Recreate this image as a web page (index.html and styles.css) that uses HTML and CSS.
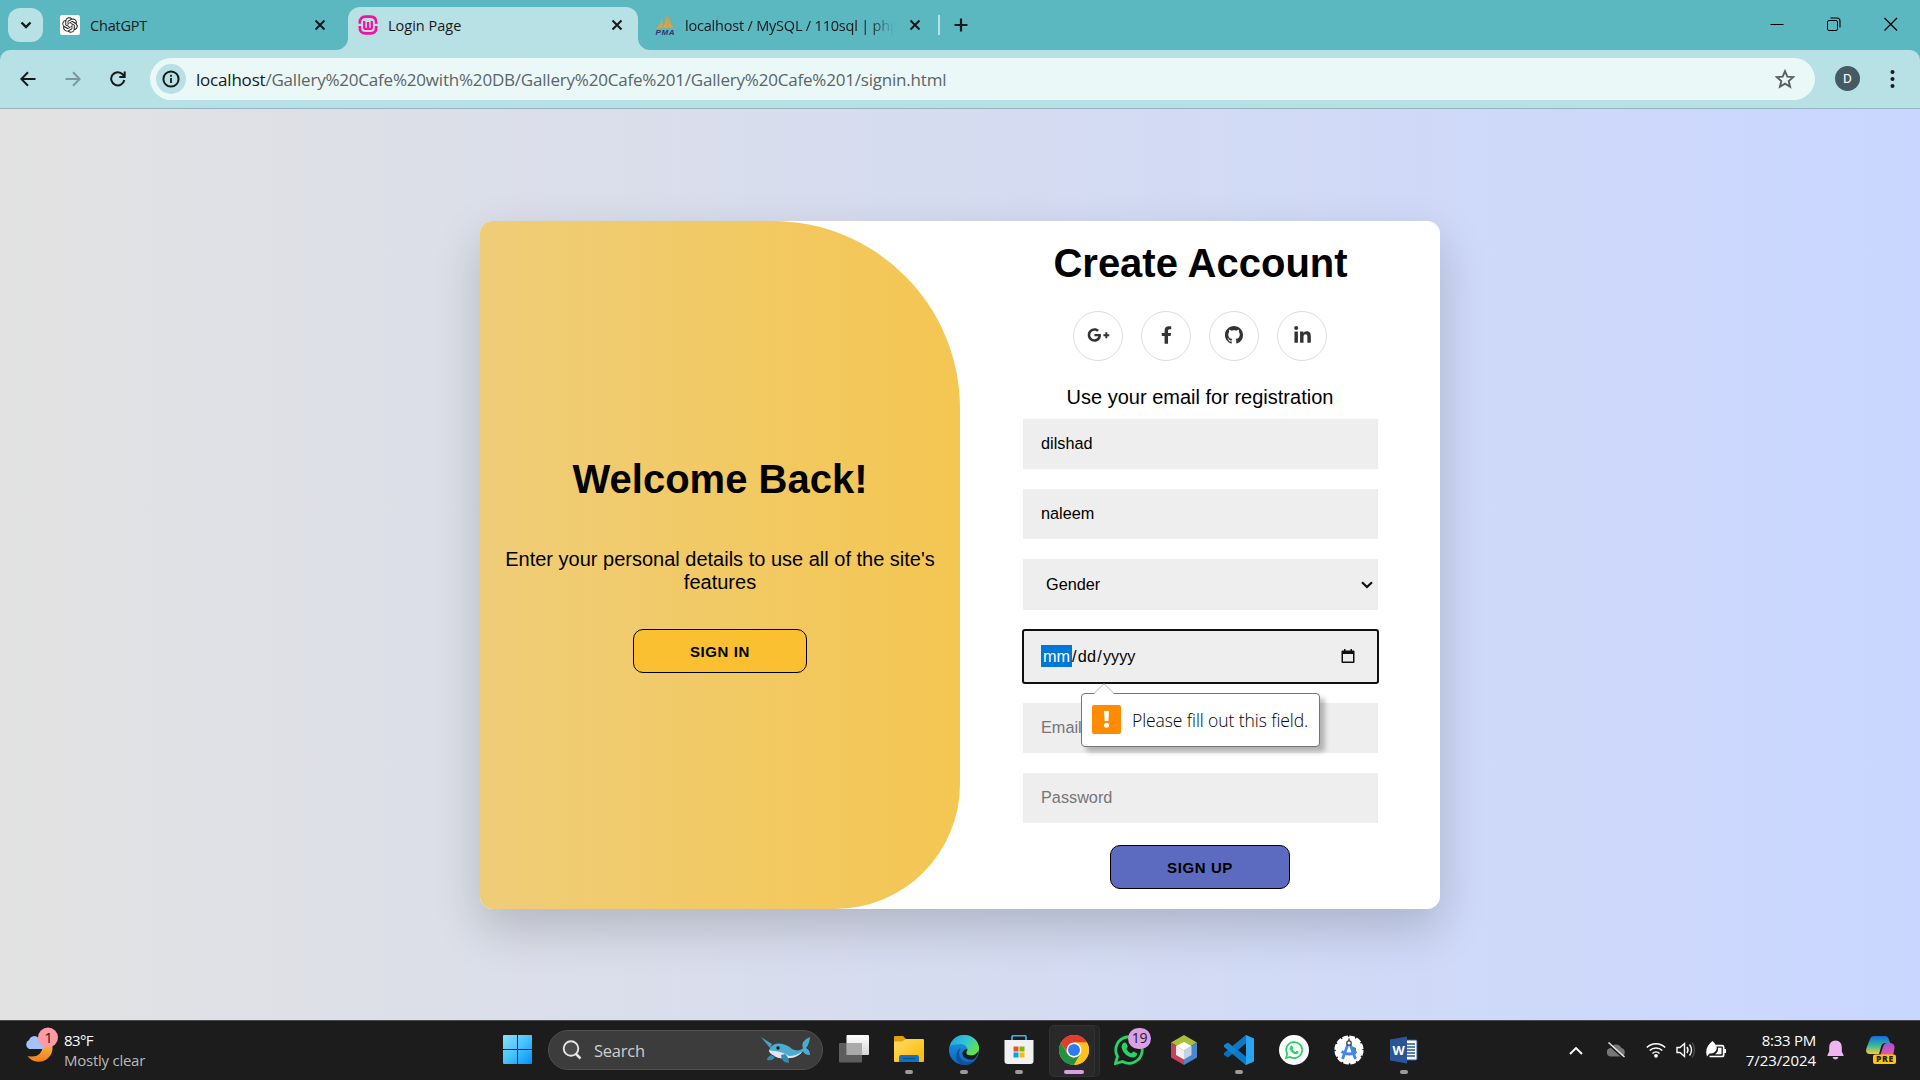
FILE: index.html
```html
<!DOCTYPE html>
<html lang="en">
<head>
<meta charset="utf-8">
<title>Login Page</title>
<link rel="stylesheet" href="styles.css">
</head>
<body>
<div class="tabstrip">
  <div class="tab-search"><svg width="12" height="8" viewBox="0 0 12 8"><path d="M1.5 1.5 6 6l4.500-4.500" fill="none" stroke="#17191b" stroke-width="2.400"/></svg></div>
  <div class="tab tab-one">
    <svg class="fav" viewBox="0 0 20 20"><rect width="20" height="20" rx="2" fill="#fff"/><path transform="translate(2.200 2.200) scale(.65)" fill="#222" d="M22.2819 9.8211a5.9847 5.9847 0 0 0-.5157-4.9108 6.0462 6.0462 0 0 0-6.5098-2.9A6.0651 6.0651 0 0 0 4.9807 4.1818a5.9847 5.9847 0 0 0-3.9977 2.9 6.0462 6.0462 0 0 0 .7427 7.0966 5.98 5.98 0 0 0 .511 4.9107 6.051 6.051 0 0 0 6.5146 2.9001A5.9847 5.9847 0 0 0 13.2599 24a6.0557 6.0557 0 0 0 5.7718-4.2058 5.9894 5.9894 0 0 0 3.9977-2.9001 6.0557 6.0557 0 0 0-.7475-7.0729zm-9.022 12.6081a4.4755 4.4755 0 0 1-2.8764-1.0408l.1419-.0804 4.7783-2.7582a.7948.7948 0 0 0 .3927-.6813v-6.7369l2.02 1.1686a.071.071 0 0 1 .038.052v5.5826a4.504 4.504 0 0 1-4.4945 4.4944zm-9.6607-4.1254a4.4708 4.4708 0 0 1-.5346-3.0137l.142.0852 4.783 2.7582a.7712.7712 0 0 0 .7806 0l5.8428-3.3685v2.3324a.0804.0804 0 0 1-.0332.0615L9.74 19.9502a4.4992 4.4992 0 0 1-6.1408-1.6464zM2.3408 7.8956a4.485 4.485 0 0 1 2.3655-1.9728V11.6a.7664.7664 0 0 0 .3879.6765l5.8144 3.3543-2.0201 1.1685a.0757.0757 0 0 1-.071 0l-4.8303-2.7865A4.504 4.504 0 0 1 2.3408 7.872zm16.5963 3.8558L13.1038 8.364 15.1192 7.2a.0757.0757 0 0 1 .071 0l4.8303 2.7913a4.4944 4.4944 0 0 1-.6765 8.1042v-5.6772a.79.79 0 0 0-.407-.667zm2.0107-3.0231l-.142-.0852-4.7735-2.7818a.7759.7759 0 0 0-.7854 0L9.409 9.2297V6.8974a.0662.0662 0 0 1 .0284-.0615l4.8303-2.7866a4.4992 4.4992 0 0 1 6.6802 4.66zM8.3065 12.863l-2.02-1.1638a.0804.0804 0 0 1-.038-.0567V6.0742a4.4992 4.4992 0 0 1 7.3757-3.4537l-.142.0805L8.704 5.459a.7948.7948 0 0 0-.3927.6813zm1.0976-2.3654l2.602-1.4998 2.6069 1.4998v2.9994l-2.5974 1.4997-2.6067-1.4997Z"/></svg>
    <span class="tab-title">ChatGPT</span>
    <svg class="close" viewBox="0 0 12 12"><path d="M1.500 1.500l9 9M10.500 1.500l-9 9"/></svg>
  </div>
  <div class="tab tab-active">
    <svg class="flare" width="12" height="12" viewBox="0 0 12 12"><path d="M12 0v12H0A12 12 0 0 0 12 0z" fill="#b7e1e4"/></svg>
    <svg class="fav" viewBox="0 0 20 20"><g fill="none" stroke="#f4119d" stroke-width="2.600"><path d="M1.800 8.800V7.500Q1.800 1.600 7.500 1.600h5Q18.200 1.600 18.200 7.500v1.300M18.200 11v1.500q0 5.900-5.700 5.900h-5q-5.700 0-5.700-5.900V11"/><path d="M6.200 6v6.500q0 1.500 1.900 1.500t1.900-1.500V7v5.500q0 1.500 1.900 1.500t1.900-1.500V6" stroke-width="2.200"/></g></svg>
    <span class="tab-title">Login Page</span>
    <svg class="close" viewBox="0 0 12 12"><path d="M1.500 1.500l9 9M10.500 1.500l-9 9"/></svg>
    <svg class="flare flare-right" width="12" height="12" viewBox="0 0 12 12"><path d="M0 0v12h12A12 12 0 0 1 0 0z" fill="#b7e1e4"/></svg>
  </div>
  <div class="tab tab-three">
    <svg class="fav" viewBox="0 0 20 20"><path d="M7 1.500Q6.500 9 1.500 14l6-1zM12 0q-1 7-4 13h5zM13 1q1.500 7 5.500 11.500l-5 .5z" fill="#f89a2c"/><text x="10" y="19.500" text-anchor="middle" font-size="8" font-weight="700" font-style="italic" font-family="Liberation Sans, sans-serif" fill="#34346e" textLength="19">PMA</text></svg>
    <span class="tab-title fade">localhost / MySQL / 110sql | php</span>
    <svg class="close" viewBox="0 0 12 12"><path d="M1.500 1.500l9 9M10.500 1.500l-9 9"/></svg>
  </div>
  <div class="tab-sep"></div>
  <svg class="plus" width="14" height="14" viewBox="0 0 14 14"><path d="M7 .5v13M.5 7h13" stroke="#17191b" stroke-width="2.200"/></svg>
  <div class="win-controls">
    <svg width="14" height="14" viewBox="0 0 14 14"><path d="M.5 7.500h13" stroke="#000"/></svg>
    <svg width="14" height="14" viewBox="0 0 14 14"><rect x=".5" y="3.500" width="10" height="10" rx="1.500" fill="none" stroke="#000"/><path d="M3.500 1h6.500q3 0 3 3v6.500" fill="none" stroke="#000" stroke-width="1.100"/></svg>
    <svg width="14" height="14" viewBox="0 0 14 14"><path d="M.5 1l12.500 12.500M13 1 .5 13.500" stroke="#000" stroke-width="1.200"/></svg>
  </div>
</div>
<div class="toolbar-wrap">
<div class="toolbar">
  <div class="nav">
    <svg width="16" height="16" viewBox="0 0 16 16"><path d="M15.500 8H1.500M8 1.200 1.300 8 8 14.800" fill="none" stroke="#17191b" stroke-width="2"/></svg>
    <svg width="16" height="16" viewBox="0 0 16 16"><path d="M.5 8h14M8 1.200 14.700 8 8 14.800" fill="none" stroke="#7b999c" stroke-width="2"/></svg>
    <svg width="16" height="16" viewBox="0 0 16 16"><path d="M14.300 9A6.600 6.600 0 1 1 12.800 3.500L14.500 5.500M14.700.5v5.400H9.300" fill="none" stroke="#17191b" stroke-width="2"/></svg>
  </div>
  <div class="urlbar">
    <div class="site-info"><svg width="18" height="18" viewBox="0 0 18 18"><circle cx="9" cy="9" r="7.600" fill="none" stroke="#17191b" stroke-width="2"/><path d="M9 8v5M9 4.800v2" stroke="#17191b" stroke-width="1.800"/></svg></div>
    <span class="url"><b>localhost</b>/Gallery%20Cafe%20with%20DB/Gallery%20Cafe%201/Gallery%20Cafe%201/signin.html</span>
    <svg class="star" width="20" height="20" viewBox="0 0 20 20"><path d="M10 2.200l2.300 5.400 5.900.5-4.500 3.900 1.400 5.800-5.100-3.100-5.100 3.100 1.400-5.800L1.800 8.100l5.900-.5z" fill="none" stroke="#5b5f60" stroke-width="1.900"/></svg>
  </div>
  <div class="avatar">D</div>
  <svg class="dots" width="5" height="20" viewBox="0 0 5 20"><g fill="#17191b"><circle cx="2.500" cy="3" r="2"/><circle cx="2.500" cy="10" r="2"/><circle cx="2.500" cy="17" r="2"/></g></svg>
</div>
</div>

<main class="page">
  <div class="card">
    <section class="welcome">
      <h1>Welcome Back!</h1>
      <p>Enter your personal details to use all of the site's features</p>
      <button class="btn btn-in" type="button">Sign In</button>
    </section>
    <form class="signup">
      <h1>Create Account</h1>
      <div class="social">
        <a><svg width="23" height="18" viewBox="0 0 640 512"><path d="M386.061 228.496c1.834 9.692 3.143 19.384 3.143 31.956C389.204 370.205 315.599 448 204.800 448c-106.084 0-192-85.915-192-192s85.916-192 192-192c51.864 0 95.083 18.859 128.611 50.292l-52.126 50.030c-14.145-13.621-39.028-29.599-76.485-29.599-65.484 0-118.920 54.221-118.920 121.277 0 67.056 53.436 121.277 118.920 121.277 75.961 0 104.513-54.745 108.965-82.773H204.800v-66.009h181.261zm185.406 6.437V179.200h-56.001v55.733h-55.733v56.001h55.733v55.733h56.001v-55.733H627.200v-56.001h-55.733z"/></svg></a>
        <a><svg width="11" height="18" viewBox="0 0 320 512"><path d="M279.140 288l14.220-92.660h-88.910v-60.130c0-25.350 12.420-50.060 52.240-50.060h40.420V6.260S260.430 0 225.360 0c-73.220 0-121.080 44.380-121.080 124.720v70.620H22.890V288h81.390v224h100.170V288z"/></svg></a>
        <a><svg width="18" height="18" viewBox="0 0 16 16"><path d="M8 0C3.58 0 0 3.58 0 8c0 3.54 2.29 6.53 5.47 7.59.4.07.55-.17.55-.38 0-.19-.01-.82-.01-1.49-2.01.37-2.53-.49-2.69-.94-.09-.23-.48-.94-.82-1.13-.28-.15-.68-.52-.01-.53.63-.01 1.08.58 1.23.82.72 1.21 1.87.87 2.33.66.07-.52.28-.87.51-1.07-1.78-.2-3.64-.89-3.64-3.95 0-.87.31-1.59.82-2.15-.08-.2-.36-1.02.08-2.12 0 0 .67-.21 2.2.82.64-.18 1.32-.27 2-.27.68 0 1.36.09 2 .27 1.53-1.04 2.2-.82 2.2-.82.44 1.1.16 1.92.08 2.12.51.56.82 1.27.82 2.15 0 3.07-1.87 3.75-3.65 3.95.29.25.54.73.54 1.48 0 1.07-.01 1.93-.01 2.2 0 .21.15.46.55.38A8.013 8.013 0 0 0 16 8c0-4.42-3.58-8-8-8z"/></svg></a>
        <a><svg width="17" height="19" viewBox="0 0 448 512"><path d="M100.280 448H7.400V148.900h92.880zM53.790 108.100C24.090 108.100 0 83.500 0 53.800a53.790 53.790 0 0 1 107.580 0c0 29.700-24.100 54.300-53.790 54.300zM447.900 448h-92.680V302.400c0-34.700-.7-79.200-48.290-79.200-48.290 0-55.690 37.700-55.690 76.700V448h-92.780V148.900h89.080v40.800h1.300c12.400-23.500 42.690-48.300 87.880-48.300 94 0 111.280 61.900 111.280 142.300V448z"/></svg></a>
      </div>
      <span class="hint">Use your email for registration</span>
      <div class="field">dilshad</div>
      <div class="field">naleem</div>
      <div class="field field-select"><span>Gender</span><svg width="12" height="8" viewBox="0 0 12 8"><path d="M1 1.200 6 6l5-4.800" fill="none" stroke="#101010" stroke-width="2.200"/></svg></div>
      <div class="field field-date">
        <span class="date"><mark>mm</mark>/<i>dd</i>/<i>yyyy</i></span>
        <svg width="14" height="15" viewBox="0 0 14 15"><path d="M3 0h1.500v1.500h5V0H11v1.500h1.500q1 0 1 1V13q0 1-1 1h-11q-1 0-1-1V2.500q0-1 1-1H3zM2 5v7.500h10V5z" fill="#101010" fill-rule="evenodd"/></svg>
        <div class="tooltip">
          <svg class="tip-arrow" width="22" height="12" viewBox="0 0 22 12"><path d="M0 12 11 1l11 11z" fill="#fff"/><path d="M.5 11 11 .7 21.500 11" fill="none" stroke="#b5b5b5"/></svg>
          <svg width="29" height="29" viewBox="0 0 29 29"><rect width="29" height="29" rx="2" fill="#ff8c00"/><path d="M12 6h5l-.6 10h-3.800z" fill="#fff"/><circle cx="14.500" cy="20.300" r="2.500" fill="#fff"/></svg>
          <span>Please fill out this field.</span>
        </div>
      </div>
      <div class="field placeholder">Email</div>
      <div class="field placeholder">Password</div>
      <button class="btn btn-up" type="button">Sign Up</button>
    </form>
  </div>
</main>

<footer class="taskbar">
  <div class="weather">
    <svg width="36" height="40" viewBox="0 0 36 40"><defs><linearGradient id="moon" x2="0" y2="1"><stop offset="0" stop-color="#f6c443"/><stop offset="1" stop-color="#f07d1c"/></linearGradient></defs><path d="M26 14a12.500 12.500 0 1 1-22.500 16Q17 33 19 20z" fill="url(#moon)" /><path d="M5 23a5 5 0 0 1 0-9 5.500 5.500 0 0 1 9.500-2A5 5 0 0 1 18 23z" fill="#a3c2f7"/><circle cx="24" cy="11.500" r="10" fill="#ff99a4"/><text x="24.500" y="17" font-size="15" text-anchor="middle" font-family="Open Sans, sans-serif" fill="#222">1</text></svg>
    <div class="weather-text"><span class="temp">83°F</span><span class="sky">Mostly clear</span></div>
  </div>
  <svg class="start" width="30" height="30" viewBox="0 0 30 30"><defs><linearGradient id="win" x2="1" y2="1"><stop offset="0" stop-color="#8be0fb"/><stop offset=".5" stop-color="#45c3fb"/><stop offset="1" stop-color="#078ff5"/></linearGradient></defs><path d="M1 0h13v14H0V1q0-1 1-1zM15 0h13q1 0 1 1v13H15zM0 15h14v14H1q-1 0-1-1zM15 15h14v13q0 1-1 1H15z" fill="url(#win)"/></svg>
  <div class="search">
    <svg width="20" height="20" viewBox="0 0 20 20"><path d="M13 13l5.500 5.500" stroke="#e6e6e6" stroke-width="2.500"/><circle cx="9" cy="8.500" r="7.300" fill="#4a4a4a" stroke="#e6e6e6" stroke-width="1.900"/></svg>
    <span>Search</span>
    <svg class="whale" width="50" height="30" viewBox="0 0 50 30"><path d="M0 2l11 7-2 4z" fill="#4aa3c4"/><path d="M8 15Q11 8 18 8.500q8 .5 13 5.500 6 3 11-.5Q39 6 49 2q-1 8-4 11 4 2 4 7-6 0-7-4-5 6-13 7-11 2-17-3-4-2-4-5z" fill="#4aadcf"/><path d="M8 15q2 1 6 1 8 1 14 5 8 0 14-5-5 6.500-13 7-11 2-17-3-4-2-4-5z" fill="#e9e1f2"/><path d="M10 20q-4 2-4 5 6 1 8-3zM20 20q0 7 8 8 0-6-4-9z" fill="#318cad"/><circle cx="17" cy="13" r="1.700" fill="#15191f"/></svg>
  </div>
  <div class="apps">
    <div class="app"><svg viewBox="0 0 30 30"><defs><linearGradient id="tv" x2="0" y2="1"><stop offset="0" stop-color="#fff"/><stop offset="1" stop-color="#d5d5d5"/></linearGradient></defs><rect x="7.500" y="0" width="22.500" height="20" rx="1" fill="url(#tv)"/><rect x="0" y="8" width="23" height="19.500" rx="1" fill="#686868" opacity=".85"/><rect x="7.500" y="8" width="15.500" height="12" fill="#aaa"/></svg></div>
    <div class="app run"><svg viewBox="0 0 30 30"><defs><linearGradient id="fo" x2="1" y2="1"><stop offset="0" stop-color="#ffdc66"/><stop offset="1" stop-color="#fbb800"/></linearGradient></defs><path d="M0 2q0-1 1-1h8l3 3h10v8H0z" fill="#e39f0a"/><path d="M0 6.500h8l4-2.500h17q1 0 1 1v21q0 1-1 1H1q-1 0-1-1z" fill="url(#fo)"/><path d="M5 27v-5q0-2 2-2h16q2 0 2 2v5z" fill="#0f72c4"/><path d="M9 23.500h12" stroke="#0b4f91" stroke-width="1.300"/></svg></div>
    <div class="app run"><svg viewBox="0 0 30 30"><defs><linearGradient id="ed" x2="1" y2=".6"><stop offset="0" stop-color="#1f9de0"/><stop offset=".55" stop-color="#30c6d3"/><stop offset="1" stop-color="#6be044"/></linearGradient><linearGradient id="eb" x2="0" y2="1"><stop offset="0" stop-color="#1ba0e6"/><stop offset="1" stop-color="#0b62c0"/></linearGradient></defs><circle cx="15" cy="15" r="15" fill="url(#eb)"/><path d="M1 11C3 4 8 0 15 0c9 0 15 6.500 15 13 0 5-4 7.500-8 7.500-5 0-5.500-2-4.500-3.500 2-4-1-8-6-8-5 0-8.500 1-10.500 2z" fill="url(#ed)"/><path d="M12 13q-4 5 0 11 5 5.500 14 1.500Q20 32 12.500 29.700 5 26 8 17q1.500-3 4-4z" fill="#12509c"/><path d="M17.500 14q2-1 0 3-1 3 4 3.500 4.500.5 8-4.500-1 6-5 8.500-9 1-11-5-1-4 4-5.500z" fill="#1c1c1c"/></svg></div>
    <div class="app run"><svg viewBox="0 0 30 30"><path d="M8 6V2q0-1.300 1.300-1.300h11.400Q22 .7 22 2v4" fill="none" stroke="#34b5ef" stroke-width="1.700"/><path d="M.5 5h29v21q0 3-3 3h-23q-3 0-3-3z" fill="#f1f1f1"/><path d="M9.500 11.500h5v5h-5z" fill="#f25022"/><path d="M15.500 11.500h5v5h-5z" fill="#7fba00"/><path d="M9.500 17.500h5v5h-5z" fill="#00a4ef"/><path d="M15.500 17.500h5v5h-5z" fill="#ffb900"/></svg></div>
    <div class="app run current"><svg viewBox="0 0 30 30"><circle cx="15" cy="15" r="15" fill="#fbc116"/><path d="M2 7.500A15 15 0 0 1 28 7.500H15L9 18.750z" fill="#e33b2e"/><path d="M2 7.500 8.500 18.750Q12 23 15 22.500L21.500 18.750 15 30A15 15 0 0 1 2 7.500z" fill="#229342"/><path d="M15 7.500h13A15 15 0 0 1 15 30l6.500-11.250z" fill="#fcc31e"/><circle cx="15" cy="15" r="7.500" fill="#fff"/><circle cx="15" cy="15" r="6" fill="#2f7cf0"/></svg></div>
    <div class="app"><svg viewBox="0 0 30 30"><path d="M1.500 28.500l2-7A13.200 13.200 0 1 1 8.500 26.500z" fill="none" stroke="#25d366" stroke-width="2.800"/><path d="M10 7.500l2 .2 1.800 4-1.500 2.200q2 3.500 5 4.500l2-2 3.800 1.900q0 4-4 4.200-9-1-11.600-10 .3-4 2.500-5z" fill="#25d366"/></svg><span class="count">19</span></div>
    <div class="app"><svg viewBox="0 0 30 30"><path d="M15 0 28 7.500 15 15 2 7.500z" fill="#a9bf3a"/><path d="M2 7.500V22.500L15 30V15z" fill="#c8405f"/><path d="M28 7.500V22.500L15 30V15z" fill="#4a86c9"/><path d="M15 7l7.500 4-7.500 4.500L7 11z" fill="#fff"/><path d="M7 11l8 4.500v9L7 20z" fill="#f4efef"/><path d="M22.500 11v9L15 24.500v-9z" fill="#c5d2e3"/></svg></div>
    <div class="app run"><svg viewBox="0 0 30 30"><path d="M22 0l8 3.500v23L22 30z" fill="#2aa5f2"/><path d="M22 0v8L4 22.500 0 20v-2z" fill="#0a6fb8"/><path d="M22 30v-8L4 7.500 0 10v2z" fill="#1383cf"/><path d="M22 0v8l-8 7-5-4zM22 30v-8l-8-7-5 4z" fill="#0d78c6"/></svg></div>
    <div class="app"><svg viewBox="0 0 30 30"><circle cx="15" cy="15" r="15" fill="#fff"/><path d="M7 23l1.200-4A8 8 0 1 1 11.200 22z" fill="none" stroke="#25d366" stroke-width="1.700"/><path d="M12 10.500l1.200.1 1 2.300-.8 1.300q1.200 2 3 2.700l1.200-1.200 2.200 1.100q0 2.300-2.400 2.500-5.300-.6-6.900-6z" fill="#25d366"/></svg></div>
    <div class="app"><svg viewBox="0 0 30 30"><circle cx="15" cy="15" r="13.300" fill="#fff" stroke="#fff" stroke-width="2.600" stroke-dasharray="5.500 1.460"/><path d="M17 11l5 2v6l-4 1z" fill="#2d9d58"/><path d="M14 9 8.500 24M16 9l5.500 15M7.500 16.500q7.500 5 15 0" fill="none" stroke="#4285f4" stroke-width="2.800"/><circle cx="15" cy="8" r="2.200" fill="#fff" stroke="#444" stroke-width="1.300"/><path d="M15 3.500V6" stroke="#444" stroke-width="1.500"/></svg></div>
    <div class="app run"><svg viewBox="0 0 30 30"><path d="M16 5h11q1 0 1 1v18q0 1-1 1H16z" fill="#fff" stroke="#2a5699" stroke-width="1"/><path d="M17 9h9M17 12h9M17 15h9M17 18h9M17 21h9" stroke="#2a5699" stroke-width="1.300"/><path d="M1 4.500 18 1.500v27L1 25.500z" fill="#2a5699"/><text x="9.500" y="20" font-size="13" font-weight="700" text-anchor="middle" font-family="Open Sans, sans-serif" fill="#fff" textLength="12" lengthAdjust="spacingAndGlyphs">W</text></svg></div>
  </div>
  <div class="tray">
    <svg class="chev" width="14" height="9" viewBox="0 0 14 9"><path d="M1 8l6-6 6 6" fill="none" stroke="#fff" stroke-width="1.900"/></svg>
    <svg class="drive" width="20" height="16" viewBox="0 0 20 16"><path d="M4.500 14.500a4.300 4.300 0 0 1 0-8.500A6 6 0 0 1 15.500 6a4.500 4.500 0 0 1 .5 8.500z" fill="#777"/><path d="M1.800 1.800 17.300 16" stroke="#1c1c1c" stroke-width="1.600"/><path d="M2.500.5 18.500 15" stroke="#e8e8e8" stroke-width="1.500"/></svg>
    <svg width="20" height="16" viewBox="0 0 20 16"><g fill="none" stroke="#fff" stroke-width="1.500"><path d="M.8 5.500a13 13 0 0 1 18.400 0M3.700 8.500a9 9 0 0 1 12.600 0M6.500 11.500a5 5 0 0 1 7 0"/></g><circle cx="10" cy="13.800" r="1.900" fill="#fff"/></svg>
    <svg width="20" height="18" viewBox="0 0 20 18"><path d="M1 6.500h3l4.500-4v13l-4.500-4H1z" fill="none" stroke="#fff" stroke-width="1.400"/><path d="M11 6q2 3 0 6M13.500 3.500q4 5.500 0 11" fill="none" stroke="#fff" stroke-width="1.400"/><path d="M16 1.500q5 7.500 0 15" fill="none" stroke="#555" stroke-width="1.300"/></svg>
    <svg width="20" height="18" viewBox="0 0 20 18"><path d="M10 4.700h6q1.700 0 1.700 1.500v7.500q0 1.800-1.700 1.800H3.500M19.200 8v4" fill="none" stroke="#fff" stroke-width="1.700"/><path d="M12 6.800h3.500v6.500H9q3.500-2 3-6.500z" fill="#fff"/><path d="M6.500 0q6 5.500 3.500 9.500-2 3.500-6.500 3L1 15.500q-3-9 5.500-15.500z" fill="#fff"/></svg>
    <div class="clock"><span>8:33 PM</span><span class="day">7/23/2024</span></div>
    <svg class="bell" width="17" height="20" viewBox="0 0 17 20"><path d="M8.500.5q6 .3 6.300 6.500v4.500l1.700 3.500v1H.5v-1l1.700-3.500V7Q2.500.8 8.500.5zM5.500 17h6q-1 2.500-3 2.500t-3-2.500z" fill="#efb5f0"/></svg>
    <svg class="copilot" width="30" height="30" viewBox="0 0 30 30"><defs><linearGradient id="c1" x2="0" y2="1"><stop offset="0" stop-color="#1769e0"/><stop offset=".5" stop-color="#2fb5a0"/><stop offset="1" stop-color="#f2d02e"/></linearGradient><linearGradient id="c2" x2="0" y2="1"><stop offset="0" stop-color="#a24de8"/><stop offset="1" stop-color="#f25c8e"/></linearGradient></defs><path d="M8 1h11q3 0 4 4l1 3h-5q-3 0-4 4l-2 7H3q-4-1-2.500-6L4 4q1-3 4-3z" fill="url(#c1)"/><path d="M17 12q1-4 4-4h4q4 1 3.500 5L27 21H14z" fill="url(#c2)"/><rect x="7" y="19.500" width="23" height="9.500" rx="2" fill="#ffc60a"/><text x="18.500" y="27" font-size="8.500" font-weight="800" text-anchor="middle" font-family="Open Sans, sans-serif" fill="#222" textLength="17">PRE</text></svg>
  </div>
</footer>
</body>
</html>
```
FILE: styles.css
```css
* { box-sizing: border-box; }
body { margin: 0; width: 1920px; height: 1080px; overflow: hidden; display: flex; flex-direction: column; font-family: "Liberation Sans", Arial, sans-serif; color: #000; }
svg { display: block; flex: none; }

/* browser tab strip */
.tabstrip { height: 50px; flex: none; background: #5bb8c1; display: flex; align-items: flex-start; font-family: "Open Sans", sans-serif; }
.tab-search { width: 35px; height: 34px; margin: 8px 9px 0 8px; border-radius: 12px; background: #b7e1e4; display: flex; align-items: center; justify-content: center; }
.tab { height: 43px; margin-top: 7px; display: flex; align-items: center; padding-bottom: 7px; color: #17191b; position: relative; }
.tab-one { width: 296px; padding-left: 8px; padding-right: 22px; }
.tab-active { width: 290px; padding-left: 10px; padding-right: 15px; background: #b7e1e4; border-radius: 12px 12px 0 0; }
.tab-three { width: 300px; padding-left: 17px; padding-right: 17px; }
.fav { width: 20px; height: 20px; margin-right: 10px; overflow: visible; }
.tab-title { flex: 1; font-size: 14.5px; letter-spacing: -0.2px; white-space: nowrap; overflow: hidden; line-height: 22px; padding-top: 2px; }
.tab-active .tab-title { letter-spacing: 0; }
.fade { flex: none; width: 209px; margin-right: 15px; -webkit-mask-image: linear-gradient(to right, #000 88%, transparent); mask-image: linear-gradient(to right, #000 88%, transparent); }
.close { width: 12px; height: 12px; stroke: #17191b; stroke-width: 2; fill: none; }
.flare { position: absolute; left: -12px; bottom: 0; }
.flare-right { left: auto; right: -12px; }
.tab-sep { width: 2px; height: 20px; margin-top: 15px; background: #b7e1e4; }
.plus { margin: 18px 0 0 14px; }
.win-controls { margin: 17px 22px 0 auto; display: flex; gap: 43px; }

/* address bar */
.toolbar-wrap { height: 59px; flex: none; background: #5bb8c1; }
.toolbar { height: 59px; background: #b7e1e4; border-bottom: 1px solid #94b5bd; border-radius: 10px 10px 0 0; display: flex; align-items: center; padding: 0 25px 1px 20px; }
.nav { display: flex; gap: 29px; width: 130px; }
.urlbar { width: 1665px; height: 42px; border-radius: 21px; background: #ebf8f8; display: flex; align-items: center; padding: 0 20px 0 6px; }
.site-info { width: 30px; height: 30px; border-radius: 50%; background: #b7e1e4; display: flex; align-items: center; justify-content: center; }
.url { margin-left: 10px; flex: 1; font-family: "Open Sans", sans-serif; font-size: 17px; letter-spacing: -0.2px; color: #5c6466; line-height: 26px; padding-top: 2px; }
.url b { font-weight: 400; color: #17191b; }
.avatar { width: 25px; height: 25px; margin: 0 30px 0 20px; border-radius: 50%; background: #455a64; color: #fff; font: 13.5px/25px Roboto, sans-serif; text-align: center; }

/* sign-up page */
.page { flex: 1; background: linear-gradient(to right, #e2e2e2, #c9d6ff); display: flex; align-items: center; justify-content: center; padding-top: 1px; }
.card { width: 960px; height: 688px; border-radius: 12.5px; overflow: hidden; background: #fff; display: flex; box-shadow: 0 19px 48px rgba(0, 0, 0, .18); }
h1 { margin: 0; font-size: 40px; line-height: 46px; font-weight: 700; text-align: center; white-space: nowrap; }
.welcome { width: 480px; background: linear-gradient(to right, #efcd78, #f4c652); border-radius: 0 187.5px 125px 0; display: flex; flex-direction: column; align-items: center; padding: 235px 20px 0; }
.welcome p { margin: 46px 0 35px; font-size: 20px; line-height: 23px; text-align: center; }
.btn { height: 44px; padding: 0; border: 1px solid #000; border-radius: 10px; font: 700 15px "Liberation Sans", Arial, sans-serif; letter-spacing: .6px; text-transform: uppercase; color: #000; }
.btn-in { width: 174px; background: #fbc031; }
.btn-up { width: 180px; background: #5c6bc0; margin-top: 2px; margin-left: 87px; }
.signup { width: 480px; padding: 19px 62px 0 63px; display: flex; flex-direction: column; gap: 20px; }
.signup h1 { height: 51px; line-height: 46px; }
.social { display: flex; justify-content: center; gap: 18px; margin-right: 1px; }
.social a { width: 50px; height: 50px; border: 1px solid #ddd; border-radius: 50%; display: flex; align-items: center; justify-content: center; padding-bottom: 2px; }
.social path { fill: #333; }
.hint { font-size: 20px; line-height: 23px; text-align: center; margin: 5px 1px -10px 0; }
.field { height: 50px; flex: none; background: #eee; padding: 0 18px 2px; font-size: 16.25px; line-height: 48px; display: flex; align-items: center; }
.field-select { height: 51px; padding: 0 5px 0 23px; justify-content: space-between; }
.field-select span { padding-bottom: 2px; }
.field-date { height: 53px; border-radius: 2px; outline: 2px solid #101010; outline-offset: -1px; padding: 0 23px 0 18px; position: relative; justify-content: space-between; }
.date { display: flex; align-items: center; height: 50px; margin-bottom: 2px; }
.date mark { background: #0078d7; color: #fff; height: 22px; line-height: 22px; padding: 0 2px; }
.date i { font-style: normal; padding: 0 1.25px; }
.placeholder { color: #757575; }
.tooltip { position: absolute; z-index: 2; left: 58px; top: 63px; width: 239px; height: 54px; padding: 0 10px 2px 10px; background: #fff; border: 1px solid #767676; border-radius: 4px; box-shadow: 5px 5px 5px rgba(0, 0, 0, .25); display: flex; align-items: center; }
.tip-arrow { position: absolute; left: 11px; top: -11px; }
.tooltip span { margin-left: 11px; padding-top: 2px; font-family: "Open Sans", sans-serif; font-weight: 300; font-size: 17.5px; letter-spacing: -0.08px; line-height: 24px; white-space: nowrap; color: #000; }

/* taskbar */
.taskbar { height: 60px; flex: none; background: #1c1c1c; border-top: 1px solid #4a4a4c; display: flex; align-items: center; position: relative; font-family: "Open Sans", sans-serif; color: #fff; font-size: 15px; letter-spacing: -0.25px; padding-bottom: 1px; }
.weather { width: 479px; margin-left: 24px; display: flex; gap: 4px; padding-bottom: 5px; }
.weather-text { display: flex; flex-direction: column; line-height: 20px; padding-top: 4px; }
.temp { letter-spacing: -0.6px; }
.sky { color: #b9b9b9; }
.start { margin-right: 15px; }
.search { width: 275px; height: 40px; border-radius: 20px; background: #3c3c3c; border: 1px solid #505050; display: flex; align-items: center; padding: 0 11px 0 13px; }
.search span { flex: 1; margin-left: 12px; font-size: 16.5px; color: #cfcfcf; padding-top: 1px; }
.apps { display: flex; gap: 25px; margin-left: 16px; }
.app { width: 30px; height: 30px; position: relative; }
.app svg { width: 30px; height: 30px; position: relative; }
.run::after { content: ""; position: absolute; left: 11px; top: 35px; width: 8px; height: 4px; border-radius: 2px; background: #9b9b9b; }
.current::before { content: ""; position: absolute; left: -10px; top: -10px; width: 44px; height: 50px; border: 1px solid #333; border-radius: 5px; background: #292929; box-shadow: 5px 0 0 -1px #242424, 5px 0 0 0 #313131; }
.current::after { left: 5px; width: 20px; background: #dd9fe3; }
.count { position: absolute; left: 14px; top: -7px; width: 23px; height: 21px; border-radius: 11px; background: #dd9fe3; color: #1c1c1c; font-size: 14px; line-height: 20px; text-align: center; }
.tray { margin-left: auto; padding-right: 24px; display: flex; align-items: center; gap: 10px; }
.chev { margin-right: 13px; }
.drive { margin-right: 10px; }
.clock { width: 80px; display: flex; flex-direction: column; line-height: 20px; text-align: right; }
.day { letter-spacing: -0.1px; }
.bell { margin-left: 1px; }
.copilot { margin-left: 12px; }
```
